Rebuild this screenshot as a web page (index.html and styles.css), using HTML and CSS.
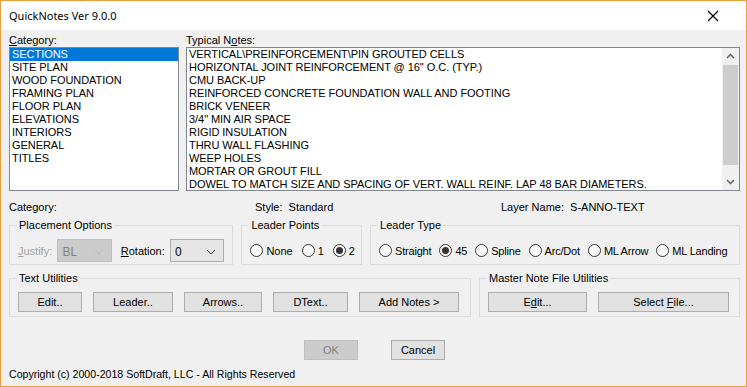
FILE: index.html
```html
<!DOCTYPE html>
<html lang="en">
<head>
  <meta charset="UTF-8">
  <title>QuickNotes Ver 9.0.0</title>
  <link rel="stylesheet" href="styles.css">
</head>
<body>
  <div class="window">
    <div class="titlebar">
      <span class="title">QuickNotes Ver 9.0.0</span>
      <svg class="close" width="12" height="12" viewBox="0 0 12 12"><path d="M1 1 L11 11 M11 1 L1 11" stroke="#000" stroke-width="1.2"/></svg>
    </div>
    <div class="content">
      <div class="lists">
        <div class="col cat-col">
          <div class="label"><u>C</u>ategory:</div>
          <ul class="listbox">
            <li class="selected">SECTIONS</li>
            <li>SITE PLAN</li>
            <li>WOOD FOUNDATION</li>
            <li>FRAMING PLAN</li>
            <li>FLOOR PLAN</li>
            <li>ELEVATIONS</li>
            <li>INTERIORS</li>
            <li>GENERAL</li>
            <li>TITLES</li>
          </ul>
        </div>
        <div class="col notes-col">
          <div class="label">Typical N<u>o</u>tes:</div>
          <div class="listbox notes-box">
            <ul>
              <li>VERTICAL\PREINFORCEMENT\PIN GROUTED CELLS</li>
              <li>HORIZONTAL JOINT REINFORCEMENT @ 16" O.C. (TYP.)</li>
              <li>CMU BACK-UP</li>
              <li>REINFORCED CONCRETE FOUNDATION WALL AND FOOTING</li>
              <li>BRICK VENEER</li>
              <li>3/4" MIN AIR SPACE</li>
              <li>RIGID INSULATION</li>
              <li>THRU WALL FLASHING</li>
              <li>WEEP HOLES</li>
              <li>MORTAR OR GROUT FILL</li>
              <li>DOWEL TO MATCH SIZE AND SPACING OF VERT. WALL REINF. LAP 48 BAR DIAMETERS.</li>
            </ul>
            <div class="scrollbar">
              <svg class="arrow" width="17" height="17" viewBox="0 0 17 17"><path d="M5 10 L8.5 6.5 L12 10" fill="none" stroke="#606060" stroke-width="1.5"/></svg>
              <div class="track"><div class="thumb"></div></div>
              <svg class="arrow" width="17" height="17" viewBox="0 0 17 17"><path d="M5 7 L8.5 10.5 L12 7" fill="none" stroke="#606060" stroke-width="1.5"/></svg>
            </div>
          </div>
        </div>
      </div>

      <div class="info-row">
        <span class="info-cat">Category:</span>
        <span class="info-style">Style:&nbsp; Standard</span>
        <span class="info-layer">Layer Name:&nbsp; S-ANNO-TEXT</span>
      </div>

      <div class="group-row options-row">
        <fieldset class="group placement">
          <legend>Placement Options</legend>
          <span class="disabled"><u>J</u>ustify:</span>
          <div class="combo combo-disabled"><span>BL</span><svg width="10" height="6" viewBox="0 0 10 6"><path d="M1 1 L5 5 L9 1" fill="none" stroke="#bdbdbd"/></svg></div>
          <span class="rot-label"><u>R</u>otation:</span>
          <div class="combo"><span>0</span><svg width="10" height="6" viewBox="0 0 10 6"><path d="M1 1 L5 5 L9 1" fill="none" stroke="#333"/></svg></div>
        </fieldset>
        <fieldset class="group points">
          <legend>Leader Points</legend>
          <label class="radio"><span class="dot"></span>None</label>
          <label class="radio"><span class="dot"></span>1</label>
          <label class="radio"><span class="dot checked"></span>2</label>
        </fieldset>
        <fieldset class="group ltype">
          <legend>Leader Type</legend>
          <label class="radio"><span class="dot"></span>Straight</label>
          <label class="radio"><span class="dot checked"></span>45</label>
          <label class="radio"><span class="dot"></span>Spline</label>
          <label class="radio"><span class="dot"></span>Arc/Dot</label>
          <label class="radio"><span class="dot"></span>ML Arrow</label>
          <label class="radio"><span class="dot"></span>ML Landing</label>
        </fieldset>
      </div>

      <div class="group-row util-row">
        <fieldset class="group text-util">
          <legend>Text Utilities</legend>
          <button class="btn w-edit">Edit..</button>
          <button class="btn w-leader">Leader..</button>
          <button class="btn w-arrows">Arrows..</button>
          <button class="btn w-dtext">DText..</button>
          <button class="btn w-add">Add Notes &gt;</button>
        </fieldset>
        <fieldset class="group master-util">
          <legend>Master Note File Utilities</legend>
          <button class="btn w-medit">E<u>d</u>it...</button>
          <button class="btn w-select">Select <u>F</u>ile...</button>
        </fieldset>
      </div>

      <div class="actions">
        <button class="btn btn-ok" disabled>OK</button>
        <button class="btn btn-cancel">Cancel</button>
      </div>

      <div class="copyright">Copyright (c) 2000-2018 SoftDraft, LLC - All Rights Reserved</div>
    </div>
  </div>
</body>
</html>
```

FILE: styles.css
```css
body {
  margin: 0;
  font-family: "Liberation Sans", Arial, sans-serif;
  font-size: 11px;
  color: #000;
  background: #f0f0f0;
}
.window {
  width: 747px;
  height: 387px;
  box-sizing: border-box;
  border: 1px solid #e8a03c;
  background: #f0f0f0;
  display: flex;
  flex-direction: column;
}
.titlebar {
  height: 29px;
  background: #fff;
  display: flex;
  align-items: center;
  justify-content: space-between;
  padding: 0 27px 0 8px;
}
.title {
  font-family: "Noto Sans", sans-serif;
  font-size: 11px;
}
.content {
  padding: 4px 6px 0 8px;
  display: flex;
  flex-direction: column;
}
u {
  text-decoration: underline;
}
.lists {
  display: flex;
  gap: 7px;
}
.label {
  line-height: 13px;
  height: 13px;
}
.cat-col {
  width: 170px;
}
.notes-col {
  flex: 1;
}
.listbox {
  margin: 0;
  padding: 0;
  list-style: none;
  height: 144px;
  box-sizing: border-box;
  border: 1px solid #828790;
  background: #fff;
}
.listbox li {
  line-height: 13px;
  height: 13px;
  padding-left: 2px;
  white-space: nowrap;
  letter-spacing: -0.05px;
}
.listbox li.selected {
  background: #0078d7;
  color: #fff;
}
.notes-box {
  display: flex;
}
.notes-box ul {
  flex: 1;
  margin: 0;
  padding: 0;
  list-style: none;
  overflow: hidden;
}
.scrollbar {
  width: 17px;
  display: flex;
  flex-direction: column;
  background: #f0f0f0;
}
.scrollbar .arrow {
  display: block;
}
.track {
  flex: 1;
  padding: 0 1px;
}
.thumb {
  height: 100px;
  background: #cdcdcd;
}
.info-row {
  display: flex;
  height: 14px;
  line-height: 14px;
  margin-top: 9px;
}
.info-cat {
  width: 246px;
}
.info-style {
  width: 246px;
}
.group-row {
  display: flex;
}
.options-row {
  margin-top: 5px;
  gap: 8px;
}
.group {
  margin: 0;
  border: 1px solid #dcdcdc;
  padding: 0 8px;
  display: flex;
  align-items: center;
  box-sizing: border-box;
  min-width: 0;
}
.group legend {
  padding: 0 2px;
  margin-left: -1px;
  line-height: 13px;
}
.options-row .group {
  height: 46px;
  padding-top: 5px;
}
.placement {
  width: 225px;
}
.points {
  width: 121px;
}
.ltype {
  width: 371px;
}
.disabled {
  color: #a0a0a0;
  width: 40px;
}
.combo {
  width: 55px;
  height: 23px;
  box-sizing: border-box;
  border: 1px solid #adadad;
  background: #e5e5e5;
  display: flex;
  align-items: center;
  justify-content: space-between;
  padding: 2px 7px 0 4px;
  font-size: 12px;
}
.combo-disabled {
  background: #cccccc;
  border-color: #bfbfbf;
  color: #838383;
}
.rot-label {
  margin-left: 9px;
  width: 50px;
}
.radio {
  display: flex;
  align-items: center;
  margin-right: 9px;
  font-size: 11px;
  white-space: nowrap;
}
.dot {
  width: 13px;
  height: 13px;
  box-sizing: border-box;
  border: 1px solid #333;
  border-radius: 50%;
  background: #fff;
  margin-right: 3px;
  display: flex;
  align-items: center;
  justify-content: center;
}
.dot.checked::after {
  content: "";
  width: 7px;
  height: 7px;
  border-radius: 50%;
  background: #333;
}
.ltype .radio {
  margin-right: 8px;
  letter-spacing: -0.2px;
}
.util-row {
  margin-top: 7px;
  gap: 8px;
}
.util-row .group {
  height: 45px;
  padding-top: 3px;
  gap: 11px;
}
.text-util {
  width: 462px;
}
.master-util {
  width: 261px;
}
.btn {
  height: 20px;
  box-sizing: border-box;
  border: 1px solid #adadad;
  background: #e1e1e1;
  font-family: "Liberation Sans", Arial, sans-serif;
  font-size: 11px;
  color: #000;
  padding: 0;
}
.w-edit { width: 64px; }
.w-leader { width: 80px; }
.w-arrows { width: 78px; }
.w-dtext { width: 75px; }
.w-add { width: 100px; }
.w-medit { width: 99px; }
.w-select { width: 131px; }
.actions {
  display: flex;
  margin-top: 23px;
  padding-left: 295px;
  gap: 33px;
}
.btn-ok, .btn-cancel {
  width: 54px;
}
.btn-ok {
  background: #cccccc;
  border-color: #bfbfbf;
  color: #838383;
}
.copyright {
  margin-top: 8px;
  line-height: 13px;
  font-size: 10.6px;
}
```
